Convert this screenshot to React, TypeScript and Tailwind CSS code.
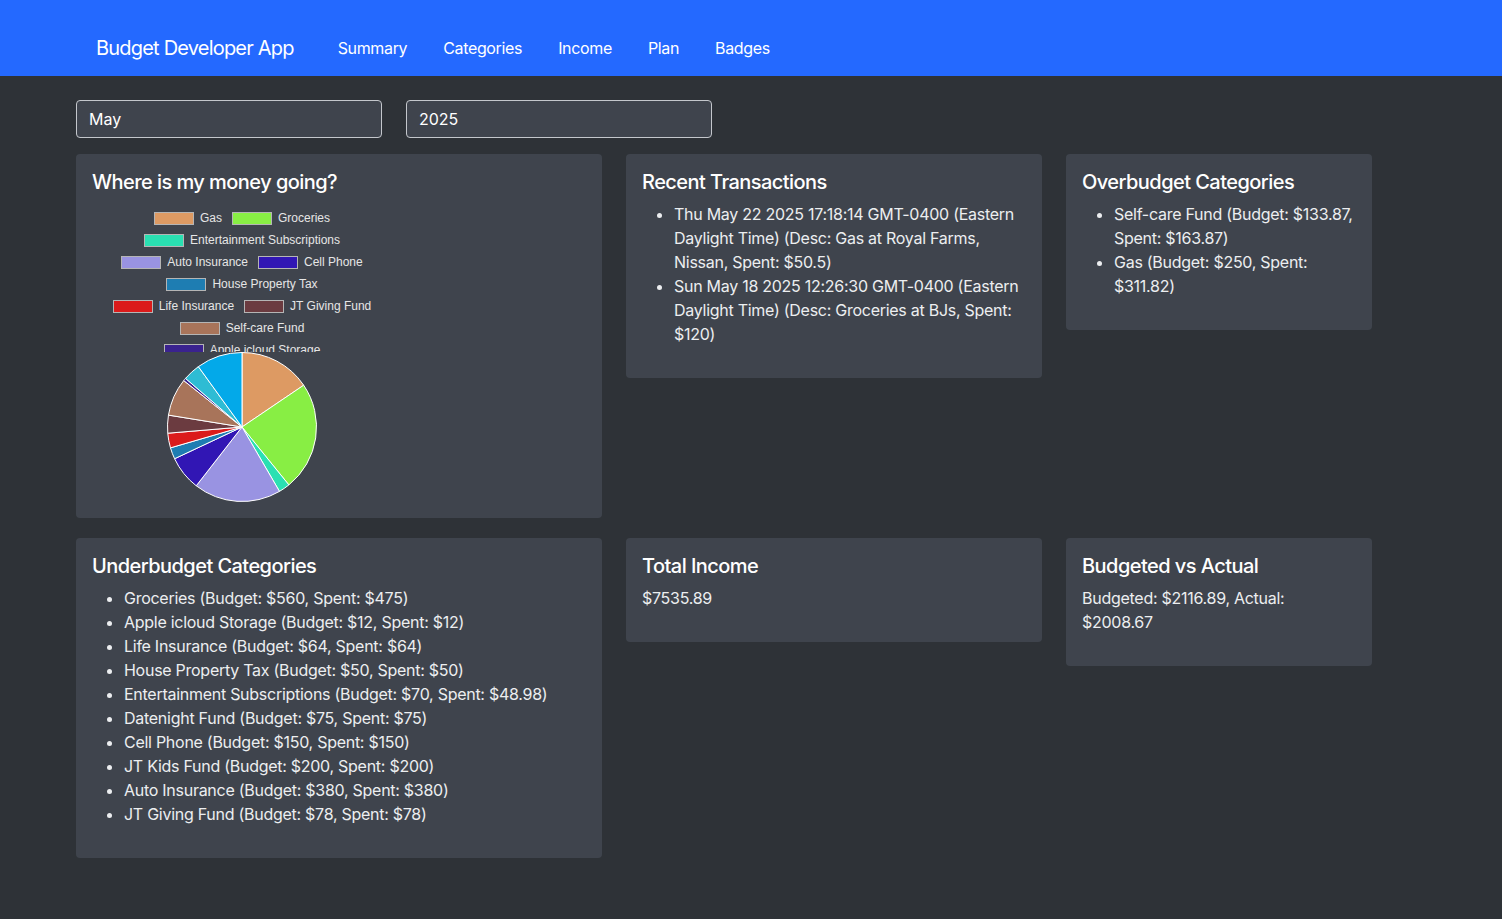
import React from 'react'

const slices = [
  { name: 'Gas', value: 311.82, color: '#dd9a63' },
  { name: 'Groceries', value: 475, color: '#88ee44' },
  { name: 'Entertainment Subscriptions', value: 48.98, color: '#2ae0b2' },
  { name: 'Auto Insurance', value: 380, color: '#9993e2' },
  { name: 'Cell Phone', value: 150, color: '#3116b4' },
  { name: 'House Property Tax', value: 50, color: '#1e7db2' },
  { name: 'Life Insurance', value: 64, color: '#db1b1b' },
  { name: 'JT Giving Fund', value: 78, color: '#6b3b40' },
  { name: 'Self-care Fund', value: 163.87, color: '#a8745a' },
  { name: 'Apple icloud Storage', value: 12, color: '#3a228f' },
  { name: 'Datenight Fund', value: 75, color: '#2ebcd4' },
  { name: 'JT Kids Fund', value: 200, color: '#03a9e9' },
]

// rows past the 7th don't fit in the legend box
const legendRows = [
  ['Gas', 'Groceries'],
  ['Entertainment Subscriptions'],
  ['Auto Insurance', 'Cell Phone'],
  ['House Property Tax'],
  ['Life Insurance', 'JT Giving Fund'],
  ['Self-care Fund'],
  ['Apple icloud Storage'],
]

const underbudget = [
  'Groceries (Budget: $560, Spent: $475)',
  'Apple icloud Storage (Budget: $12, Spent: $12)',
  'Life Insurance (Budget: $64, Spent: $64)',
  'House Property Tax (Budget: $50, Spent: $50)',
  'Entertainment Subscriptions (Budget: $70, Spent: $48.98)',
  'Datenight Fund (Budget: $75, Spent: $75)',
  'Cell Phone (Budget: $150, Spent: $150)',
  'JT Kids Fund (Budget: $200, Spent: $200)',
  'Auto Insurance (Budget: $380, Spent: $380)',
  'JT Giving Fund (Budget: $78, Spent: $78)',
]

function Pie() {
  const total = slices.reduce((s, x) => s + x.value, 0)
  const cx = 75
  const cy = 75
  const r = 74.5
  let a = -Math.PI / 2
  const paths = slices.map(s => {
    const a2 = a + (s.value / total) * Math.PI * 2
    const x1 = cx + r * Math.cos(a)
    const y1 = cy + r * Math.sin(a)
    const x2 = cx + r * Math.cos(a2)
    const y2 = cy + r * Math.sin(a2)
    const large = a2 - a > Math.PI ? 1 : 0
    const d = `M${cx},${cy} L${x1},${y1} A${r},${r} 0 ${large} 1 ${x2},${y2} Z`
    a = a2
    return <path key={s.name} d={d} fill={s.color} stroke="#fff" strokeWidth="1" strokeLinejoin="round" />
  })
  return (
    <svg width="150" height="150" viewBox="0 0 150 150">
      {paths}
    </svg>
  )
}

function Chart() {
  const colorOf = (n: string) => slices.find(s => s.name === n)?.color
  // legend is clipped to half the canvas, like the chart lib does
  return (
    <div className="w-[300px] h-[300px] flex flex-col">
      <div className="h-[150px] overflow-hidden pt-[10px] font-['Liberation_Sans',Arial,sans-serif] text-[12px] text-[#e6e6e6]">
        {legendRows.map((row, i) => (
          <div key={i} className="h-[22px] flex justify-center gap-[10px]">
            {row.map(name => (
              <div key={name} className="flex items-start gap-[6px]">
                <span
                  className="w-10 h-[13px] border border-[#b5b5b5]"
                  style={{ backgroundColor: colorOf(name) }}
                />
                <span className="leading-[13px]">{name}</span>
              </div>
            ))}
          </div>
        ))}
      </div>
      <div className="flex justify-center">
        <Pie />
      </div>
    </div>
  )
}

function Card({ title, children }: { title: string; children: React.ReactNode }) {
  return (
    <div className="bg-[#3f444d] rounded p-4">
      <h5 className="text-[20px] leading-6 font-medium tracking-[-0.55px] text-white mb-2">{title}</h5>
      {children}
    </div>
  )
}

function List({ items }: { items: string[] }) {
  return (
    <ul className="list-disc pl-8 mb-4 text-[16px] leading-6 tracking-[-0.27px] text-[#eceef0]">
      {items.map(t => (
        <li key={t}>{t}</li>
      ))}
    </ul>
  )
}

export default function App() {
  return (
    <div className="min-h-[919px] bg-[#2e3237] font-['Inter',sans-serif]">
      {/* Navbar */}
      <nav className="h-[76px] bg-[#2469ff] flex items-center pt-5 pl-[96px]">
        <span className="text-[20px] text-white tracking-[-0.8px] mr-[44px]">Budget Developer App</span>
        <div className="flex gap-9 text-[16px] text-white tracking-[-0.35px]">
          <span>Summary</span>
          <span>Categories</span>
          <span>Income</span>
          <span>Plan</span>
          <span>Badges</span>
        </div>
      </nav>

      <div className="pl-[76px] pt-6">
        {/* Month / year pickers */}
        <div className="flex gap-6 mb-4">
          <div className="w-[306px] h-[38px] flex items-center px-3 bg-[#3f444d] border border-[#c4c7cc] rounded text-[16px] text-white">
            May
          </div>
          <div className="w-[306px] h-[38px] flex items-center px-3 bg-[#3f444d] border border-[#c4c7cc] rounded text-[16px] text-white">
            2025
          </div>
        </div>

        <div className="grid grid-cols-[526px_416px_306px] gap-x-6 gap-y-5 items-start">
          <Card title="Where is my money going?">
            <Chart />
          </Card>

          <Card title="Recent Transactions">
            <List
              items={[
                'Thu May 22 2025 17:18:14 GMT-0400 (Eastern Daylight Time) (Desc: Gas at Royal Farms, Nissan, Spent: $50.5)',
                'Sun May 18 2025 12:26:30 GMT-0400 (Eastern Daylight Time) (Desc: Groceries at BJs, Spent: $120)',
              ]}
            />
          </Card>

          <Card title="Overbudget Categories">
            <List
              items={[
                'Self-care Fund (Budget: $133.87, Spent: $163.87)',
                'Gas (Budget: $250, Spent: $311.82)',
              ]}
            />
          </Card>

          <Card title="Underbudget Categories">
            <List items={underbudget} />
          </Card>

          <Card title="Total Income">
            <p className="mb-4 text-[16px] leading-6 tracking-[-0.27px] text-[#eceef0]">$7535.89</p>
          </Card>

          <Card title="Budgeted vs Actual">
            <p className="mb-4 text-[16px] leading-6 tracking-[-0.27px] text-[#eceef0]">
              Budgeted: $2116.89, Actual: $2008.67
            </p>
          </Card>
        </div>
      </div>
    </div>
  )
}
